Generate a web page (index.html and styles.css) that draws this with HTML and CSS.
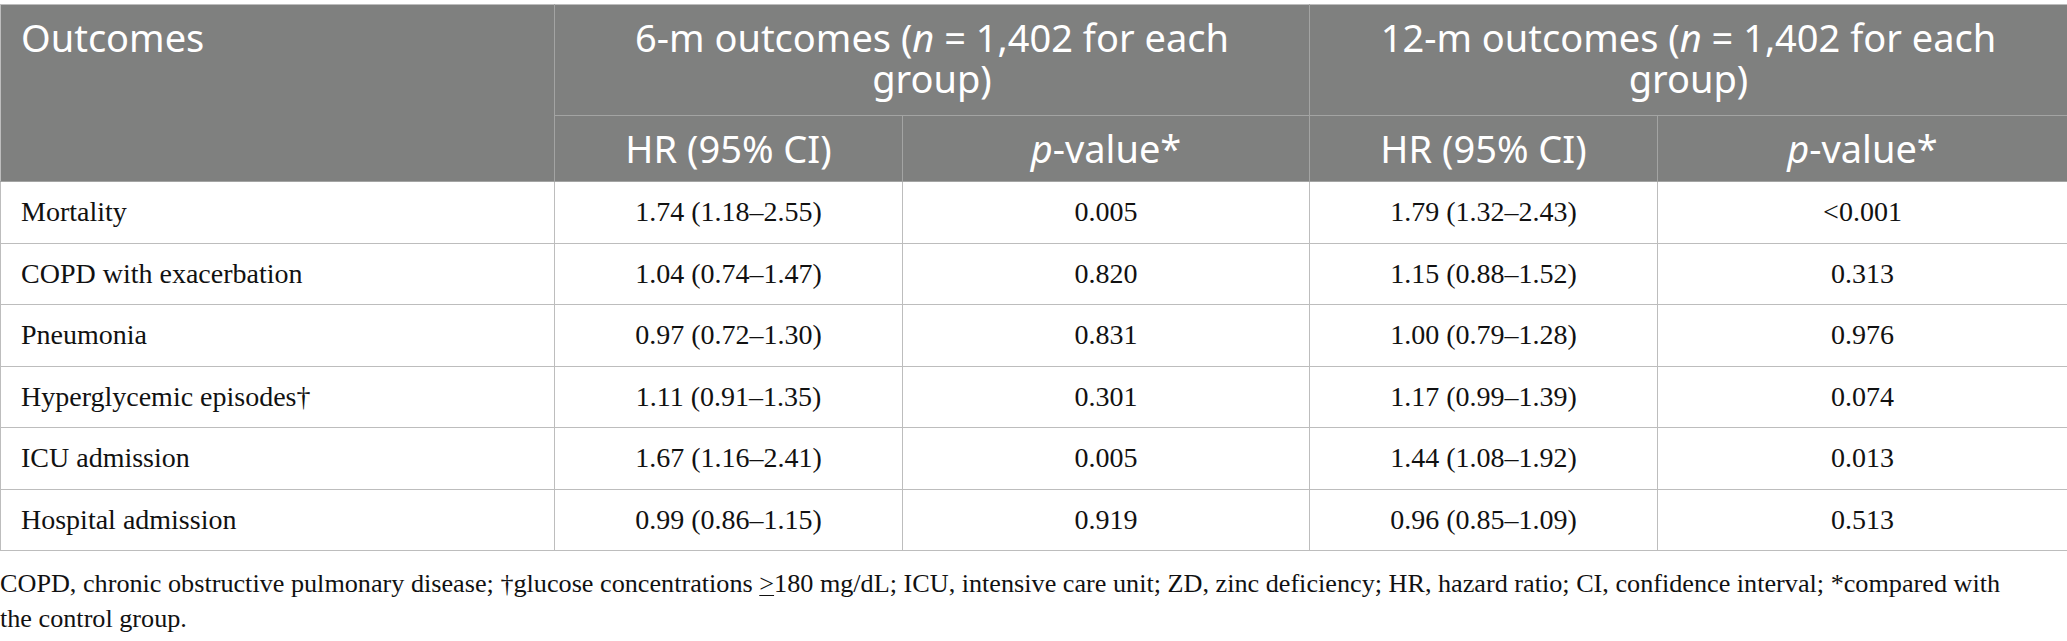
FILE: index.html
```html
<!DOCTYPE html>
<html lang="en">
<head>
<meta charset="utf-8">
<title>Outcomes table</title>
<link rel="stylesheet" href="styles.css">
</head>
<body>
<div class="wrap">
<table class="outcomes">
  <colgroup>
    <col class="c-name">
    <col class="c-hr">
    <col class="c-p">
    <col class="c-hr">
    <col class="c-p2">
  </colgroup>
  <thead>
    <tr>
      <th rowspan="2" class="h-left">Outcomes</th>
      <th colspan="2">6-m outcomes (<i>n</i> = 1,402 for each group)</th>
      <th colspan="2">12-m outcomes (<i>n</i> = 1,402 for each group)</th>
    </tr>
    <tr class="h-sub">
      <th>HR (95% CI)</th>
      <th><i>p</i>-value*</th>
      <th>HR (95% CI)</th>
      <th><i>p</i>-value*</th>
    </tr>
  </thead>
  <tbody>
    <tr><td class="name">Mortality</td><td>1.74 (1.18–2.55)</td><td>0.005</td><td>1.79 (1.32–2.43)</td><td>&lt;0.001</td></tr>
    <tr><td class="name">COPD with exacerbation</td><td>1.04 (0.74–1.47)</td><td>0.820</td><td>1.15 (0.88–1.52)</td><td>0.313</td></tr>
    <tr><td class="name">Pneumonia</td><td>0.97 (0.72–1.30)</td><td>0.831</td><td>1.00 (0.79–1.28)</td><td>0.976</td></tr>
    <tr><td class="name">Hyperglycemic episodes†</td><td>1.11 (0.91–1.35)</td><td>0.301</td><td>1.17 (0.99–1.39)</td><td>0.074</td></tr>
    <tr><td class="name">ICU admission</td><td>1.67 (1.16–2.41)</td><td>0.005</td><td>1.44 (1.08–1.92)</td><td>0.013</td></tr>
    <tr><td class="name">Hospital admission</td><td>0.99 (0.86–1.15)</td><td>0.919</td><td>0.96 (0.85–1.09)</td><td>0.513</td></tr>
  </tbody>
</table>
<p class="note">COPD, chronic obstructive pulmonary disease; †glucose concentrations <u>&gt;</u>180 mg/dL; ICU, intensive care unit; ZD, zinc deficiency; HR, hazard ratio; CI, confidence interval; *compared with the control group.</p>
</div>
</body>
</html>
```

FILE: styles.css
```css
html, body {
  margin: 0;
  padding: 0;
  background: #ffffff;
}

.wrap {
  padding-top: 4px;
}

.outcomes {
  width: 2067px;
  table-layout: fixed;
  border-collapse: collapse;
  border: 1px solid #bdbdbd;
}

.c-name { width: 554px; }
.c-hr { width: 348px; }
.c-p { width: 407px; }
.c-p2 { width: 410px; }

.outcomes th {
  background: #7f807f;
  color: #ffffff;
  font-family: "Noto Sans", "Open Sans", sans-serif;
  font-weight: 400;
  font-size: 38px;
  line-height: 41px;
  text-align: center;
  vertical-align: top;
  padding: 12px 20px 16px;
  border: 1px solid #a3a4a3;
}

.outcomes thead tr:first-child th {
  border-top-color: #bdbdbd;
}

.outcomes th.h-left {
  text-align: left;
  border-left-color: #bdbdbd;
}

.outcomes .h-sub th {
  padding: 12px 20px 12px;
  vertical-align: middle;
}

.outcomes td {
  font-family: "Liberation Serif", "Times New Roman", serif;
  font-size: 28px;
  line-height: 34.5px;
  color: #111111;
  text-align: center;
  padding: 13px 20px 13px;
  border: 1px solid #bdbdbd;
  white-space: nowrap;
}

.outcomes td.name {
  text-align: left;
}

.note {
  margin: 15px 0 0 0;
  font-family: "Liberation Serif", "Times New Roman", serif;
  font-size: 26.2px;
  line-height: 35px;
  color: #111111;
  width: 2010px;
}

.note u {
  text-decoration-thickness: 1px;
  text-underline-offset: 3px;
}
```
